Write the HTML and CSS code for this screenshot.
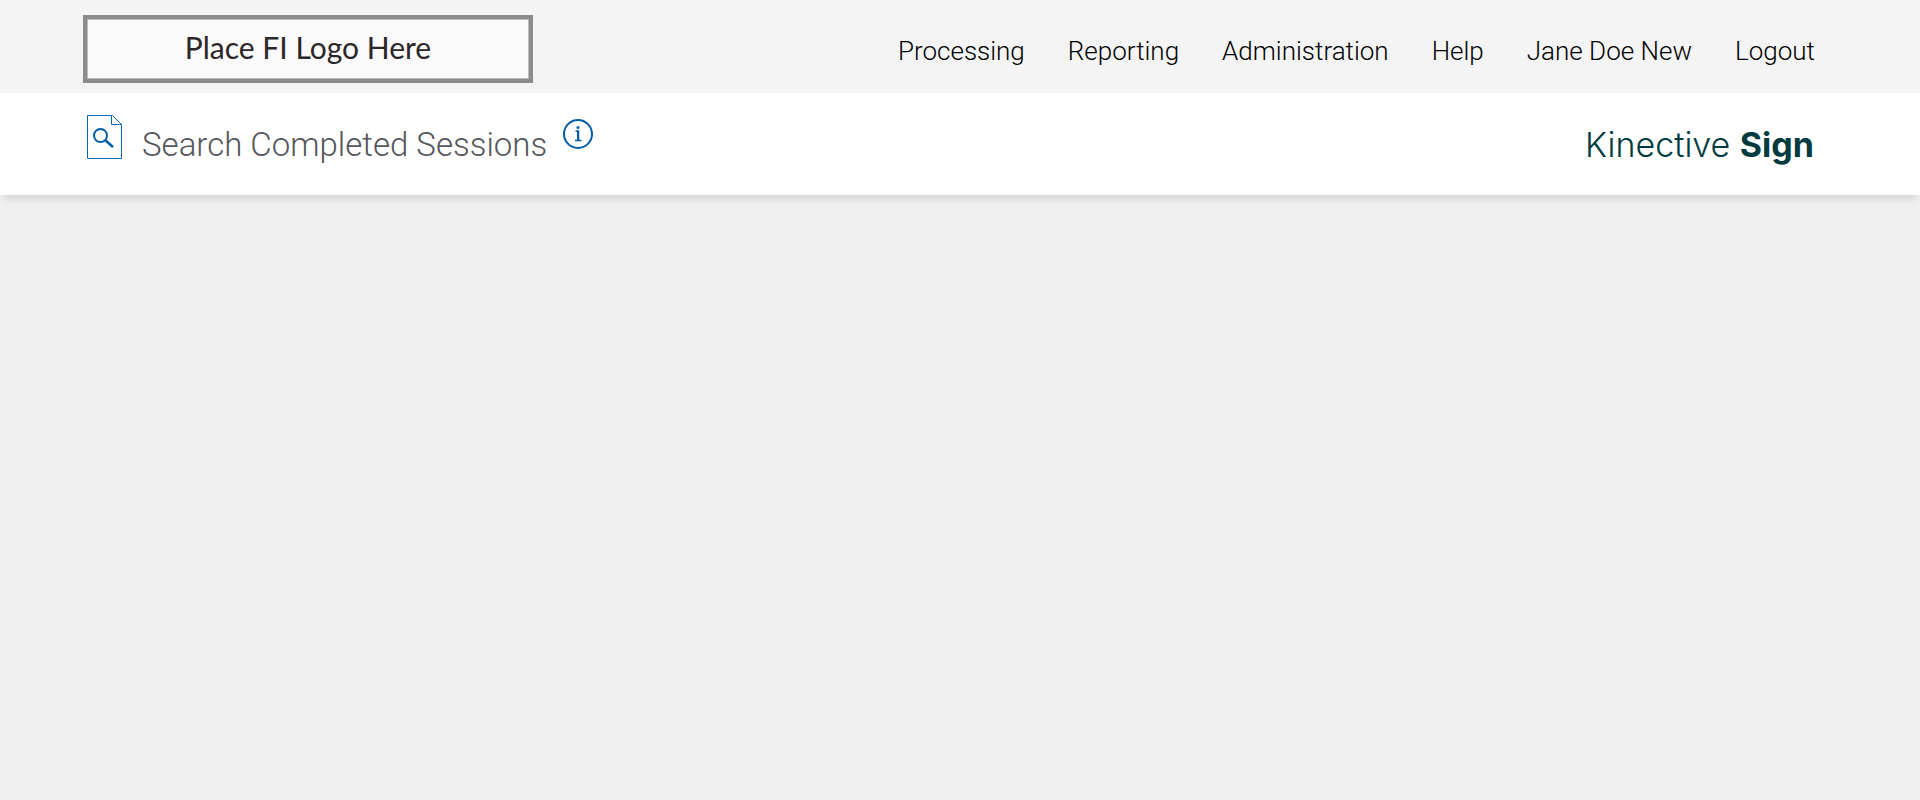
FILE: index.html
```
<!DOCTYPE html>
<html lang="en">
<head>
    <meta charset="UTF-8">
    <meta name="viewport" content="width=device-width, initial-scale=1.0">
    <title>Search Completed Sessions</title>
    <link rel="stylesheet" href="styles.css">
</head>
<body>
    <header class="top-bar">
        <div class="fi-logo">Place FI Logo Here</div>
        <nav class="main-nav">
            <a href="#">Processing</a>
            <a href="#">Reporting</a>
            <a href="#">Administration</a>
            <a href="#">Help</a>
            <a href="#">Jane Doe New</a>
            <a href="#">Logout</a>
        </nav>
    </header>
    <div class="title-bar">
        <svg class="page-icon" width="36" height="46" viewBox="0 0 36 46" fill="none" stroke="#0069b4">
            <path d="M.5 .5H25.5L34.5 9.5V43.5H.5Z M24.5 .5V9.5H34.5"/>
            <circle cx="13.500" cy="20.500" r="6.500" stroke="#005da8" stroke-width="2"/>
            <path d="M18 25L26 32" stroke="#005da8" stroke-width="2.500"/>
        </svg>
        <h1>Search Completed Sessions</h1>
        <button class="info" type="button" aria-label="Information">
            <svg width="30" height="30" viewBox="0 0 30 30" fill="none" stroke="#005da8" stroke-width="2">
                <circle cx="15" cy="15" r="14"/>
                <path d="M12.500 12H15.500V21 M12 21.500H18.500" stroke-width="1.500"/>
                <path d="M15 12V21"/>
                <circle cx="15" cy="8.500" r="1.500" fill="#005da8" stroke="none"/>
            </svg>
        </button>
        <div class="brand">Kinective <b>Sign</b></div>
    </div>
    <main></main>
</body>
</html>
```

FILE: styles.css
```
body {
    display: flex;
    flex-direction: column;
    min-height: 100vh;
    font-family: Roboto, sans-serif;
    font-weight: 300;
    background-color: #f0f0f0;
    margin: 0;
}
main {
    flex: 1;
}
.top-bar {
    display: flex;
    justify-content: space-between;
    align-items: center;
    box-sizing: border-box;
    min-height: 93px;
    padding: 5px 105px 0 83px;
    background-color: #f4f4f4;
}
.fi-logo {
    box-sizing: border-box;
    width: 450px;
    padding: 9px 0 13px;
    border: 4px solid #8c8c8c;
    background-color: #fafafa;
    box-shadow: inset 0 0 0 1px #bbb;
    color: #2b2627;
    font-family: Lato, sans-serif;
    font-size: 30px;
    font-weight: 400;
    line-height: 38px;
    text-align: center;
}
.main-nav {
    display: flex;
    gap: 43px;
    padding-top: 4px;
}
.main-nav a {
    color: #000;
    font-size: 26px;
    line-height: 32px;
    text-decoration: none;
}
.title-bar {
    display: flex;
    align-items: flex-start;
    box-sizing: border-box;
    min-height: 102px;
    padding: 22px 106px 0 87px;
    background-color: #fff;
    box-shadow: 0 6px 8px -3px rgba(0, 0, 0, 0.13);
}
h1 {
    margin: 10px 16px 0 19px;
    color: #54565b;
    font-size: 33px;
    font-weight: 300;
    line-height: 40px;
}
.info {
    display: flex;
    margin: 4px 0 0;
    padding: 0;
    border: 0;
    background: none;
    cursor: pointer;
}
.brand {
    margin: 8px 0 0 auto;
    color: #003b40;
    font-family: Inter, sans-serif;
    font-size: 34px;
    line-height: 44px;
}
.brand b {
    font-weight: 700;
}
```
